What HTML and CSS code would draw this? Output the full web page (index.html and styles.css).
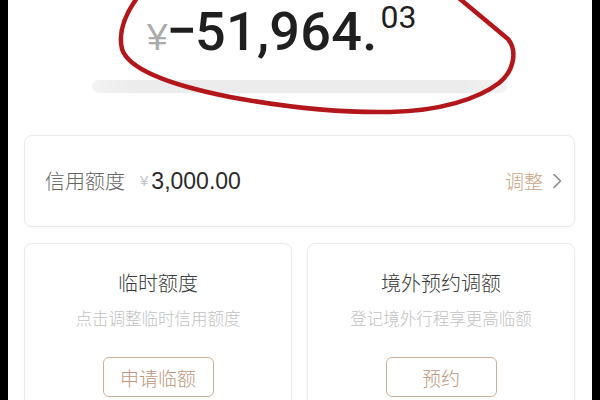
FILE: index.html
```html
<!DOCTYPE html>
<html lang="zh-CN">
<head>
<meta charset="utf-8">
<title>额度</title>
<link rel="stylesheet" href="styles.css">
</head>
<body>
<div class="screen">
  <div class="amount"><span class="yen">¥</span><span class="minus">−</span><span class="int">51,964.</span><span class="dec">03</span></div>
  <div class="bar"></div>

  <div class="limit-card">
    <span class="limit-label">信用额度</span>
    <span class="limit-yen">¥</span>
    <span class="limit-value">3,000.00</span>
    <span class="limit-adjust">调整</span>
    <svg class="chev" width="10" height="16" viewBox="0 0 10 16"><polyline points="2,1.5 8.5,8 2,14.5" fill="none" stroke="#8a8a8a" stroke-width="1.6" stroke-linecap="round" stroke-linejoin="round"/></svg>
  </div>

  <div class="tiles">
    <div class="tile">
      <div class="tile-title">临时额度</div>
      <div class="tile-sub">点击调整临时信用额度</div>
      <div class="tile-btn">申请临额</div>
    </div>
    <div class="tile">
      <div class="tile-title">境外预约调额</div>
      <div class="tile-sub">登记境外行程享更高临额</div>
      <div class="tile-btn">预约</div>
    </div>
  </div>
</div>
<svg class="scribble" width="600" height="400" viewBox="0 0 600 400">
  <path d="M 140 -6 C 126 12, 118 32, 122 49 C 128 68, 165 84, 230 97 C 290 108, 340 113, 390 112 C 440 111, 478 99, 499 83 C 515 70, 517 50, 508 39 L 454 -6" fill="none" stroke="#b3171b" stroke-width="4.5" stroke-linecap="round" stroke-linejoin="round"/>
</svg>
</body>
</html>
```

FILE: styles.css
```css
html, body {
  margin: 0;
  padding: 0;
}
body {
  background: #000;
  position: relative;
  width: 600px;
  height: 400px;
  overflow: hidden;
  font-family: "Liberation Sans", "Noto Sans CJK SC", sans-serif;
}
.screen {
  margin: 0 8px;
  height: 400px;
  background: #fff;
  padding: 0 17px 0 16px;
  box-sizing: border-box;
}
.amount {
  padding-top: 2px;
  padding-left: 123px;
  height: 60px;
  line-height: 60px;
  white-space: nowrap;
  color: #1f1f1f;
  font-family: Roboto, "Liberation Sans", sans-serif;
  font-weight: 500;
}
.yen {
  font-size: 37px;
  color: #ababab;
  font-family: "Liberation Sans", sans-serif;
  font-weight: 400;
}
.minus {
  font-size: 54px;
  margin-left: -1px;
  margin-right: -2px;
  position: relative;
  top: -1px;
}
.int {
  font-size: 54px;
  letter-spacing: 0.3px;
}
.dec {
  display: inline-block;
  font-size: 32px;
  line-height: 38px;
  font-weight: 400;
  position: relative;
  top: -22px;
  margin-left: 3px;
}
.bar {
  margin: 18px 68px 0 68px;
  height: 13px;
  border-radius: 7px;
  background: linear-gradient(to right, #f3f3f3, #ececec 10%, #ececec 90%, #f3f3f3);
}
.limit-card {
  margin-top: 42px;
  height: 92px;
  box-sizing: border-box;
  border: 1px solid #ebebeb;
  border-radius: 8px;
  box-shadow: 0 1px 3px rgba(0, 0, 0, 0.04);
  display: flex;
  align-items: center;
  padding: 0 12px 0 20px;
}
.limit-label {
  font-size: 20px;
  color: #666;
  font-family: "Noto Sans CJK SC", sans-serif;
  font-weight: 300;
  line-height: 24px;
}
.limit-yen {
  margin-left: 15px;
  font-size: 15px;
  color: #c4c4c4;
  line-height: 24px;
}
.limit-value {
  margin-left: 3px;
  font-size: 23px;
  color: #2a2a2a;
  line-height: 24px;
}
.limit-adjust {
  margin-left: auto;
  font-size: 19px;
  color: #c9a384;
  font-family: "Noto Sans CJK SC", sans-serif;
  font-weight: 300;
  line-height: 24px;
}
.chev {
  margin-left: 9px;
  display: block;
}
.tiles {
  margin-top: 16px;
  display: grid;
  grid-template-columns: 1fr 1fr;
  gap: 15px;
}
.tile {
  height: 200px;
  box-sizing: border-box;
  border: 1px solid #ebebeb;
  border-radius: 8px;
  box-shadow: 0 1px 3px rgba(0, 0, 0, 0.04);
  padding-top: 27px;
  display: flex;
  flex-direction: column;
  align-items: center;
  font-family: "Noto Sans CJK SC", sans-serif;
  font-weight: 300;
}
.tile-title {
  font-size: 20px;
  line-height: 24px;
  color: #3a3a3a;
}
.tile-sub {
  margin-top: 12px;
  font-size: 16.5px;
  line-height: 22px;
  color: #c2c2c2;
}
.tile-btn {
  margin-top: 28px;
  width: 111px;
  height: 40px;
  box-sizing: border-box;
  border: 1.5px solid #cdb09a;
  border-radius: 6px;
  display: flex;
  align-items: center;
  justify-content: center;
  font-size: 19px;
  color: #bc977b;
}
.scribble {
  position: absolute;
  left: 0;
  top: 0;
  pointer-events: none;
}
```
